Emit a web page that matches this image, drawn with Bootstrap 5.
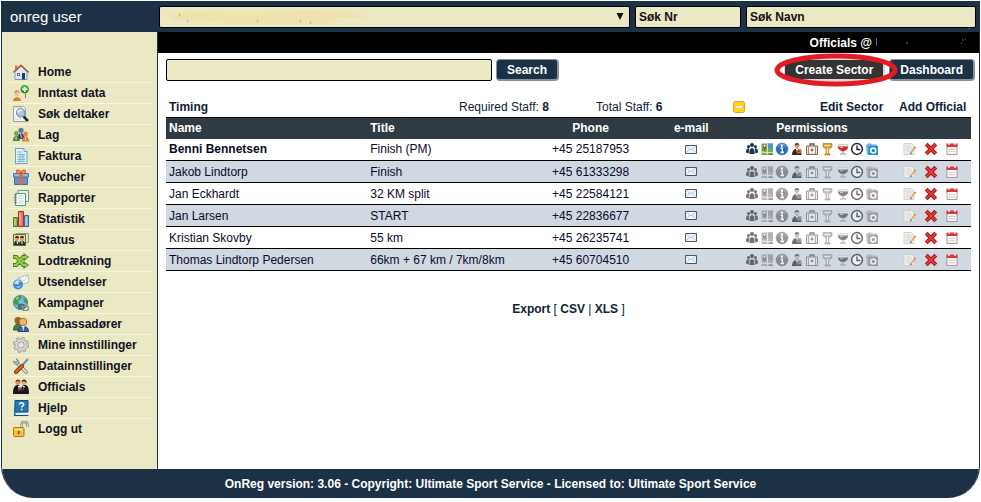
<!DOCTYPE html>
<html lang="no">
<head>
<meta charset="utf-8">
<meta name="viewport" content="width=device-width, initial-scale=1">
<title>Officials - OnReg</title>
<link rel="stylesheet" href="https://cdn.jsdelivr.net/npm/bootstrap@5.3.0/dist/css/bootstrap.min.css">
<style>
:root{--navy:#1c3146;--cream:#ebe9c3}
body{font:12px/20px "Liberation Sans",Arial,sans-serif;color:#0a0a2a;background:#fff}
svg{display:block;flex:none}
a{color:inherit;text-decoration:none}
.shell{margin:1px 1px 4px;min-height:calc(100vh - 5px);border:0 solid var(--navy);border-width:0 1px;border-radius:0 0 32px 32px;overflow:hidden}
.topbar{background:var(--navy);height:31px}
.brand{width:157px;padding-left:8px;font-size:15px;color:#fff}
.finders{gap:5px;padding-right:3px}
.field{height:22px;padding:0 3px;border:1px solid #000;border-radius:2px;background:var(--cream);font-weight:bold;color:#111;min-width:0}
.field::placeholder{color:#111;opacity:1}
.pick{appearance:none;width:100%;display:block}
.pick-art{position:absolute;inset:0;width:100%;height:22px;pointer-events:none}
.f-nr{width:106px}.f-name{width:230px}
.side{width:156px;background:var(--cream);border-right:1px solid var(--navy);padding:30px 4px 0;flex:none}
.side li{height:21px;border-bottom:1px solid #f8f6e2}
.side li:last-child{border:0}
.side a{padding-left:7px;gap:9px;color:#111122;height:20px}
.strip{background:#000;color:#fff;height:21px}
.body-pad{padding:6px 8px 0}
.tools{margin-right:-4px}
.f-search{width:326px}
.btn-nav{height:22px;padding:0 10px;border:1px solid #8c9298;border-width:1px 2px 2px 1px;border-radius:4px;background:var(--navy);color:#fff;font-weight:bold;line-height:18px}
.btn-dark2{background:#333;border-color:#d8d8d8}
.ring{position:absolute;left:-11px;top:-6px;width:126px;height:34px;pointer-events:none}
.sector{display:grid;grid-template-columns:290fr 137fr 137fr 87fr 79fr 75fr;margin-top:16px;height:20px}
.sector>*{padding-left:3px}
.sector,.export{color:#0f2438}
.people{table-layout:fixed;width:100%;border-top:1px solid #000}
.people th{background:#2f3a43;color:#fff;height:21px;line-height:20px;padding:0 3px}
.people td{height:22px;line-height:20px;padding:0 3px;border-bottom:1px solid #000}
.people tbody tr:nth-child(even){background:#d0d8e2}
.off{filter:grayscale(1);opacity:.68}
.acts>div{gap:7px;padding-left:18px}
.export{margin-top:28px}
.foot{background:var(--navy);color:#fff;height:29px}
</style>
<script src="https://cdn.jsdelivr.net/npm/bootstrap@5.3.0/dist/js/bootstrap.bundle.min.js"></script>
</head>
<body>
<svg width="0" height="0" class="position-absolute" aria-hidden="true">
<defs>
<symbol id="home" viewBox="0 0 16 16"><path d="M2 8v7.500h12V8L8 2z" fill="#dcebf7" stroke="#6f9cc0"/><path d="M2 1.500h2.500V5L2 7z" fill="#c9796a"/><path d="M.5 8.500 8 1.300l7.500 7.200" fill="none" stroke="#b5543c" stroke-width="1.600"/><path d="M1.500 9.300 8 3l6.500 6.300" fill="none" stroke="#f0d8cc" stroke-width=".8"/><path d="M9 9h3v6.500H9z" fill="#253c62"/><path d="M4 9h3v3H4z" fill="#35557d"/><path d="M5.500 9v3M4 10.500h3" stroke="#b9d7ef" stroke-width=".6"/></symbol>
<symbol id="adduser" viewBox="0 0 16 16"><circle cx="4" cy="8.500" r="2.700" fill="#f1c49c"/><path d="M1.300 8c0-4 5.400-4 5.400 0L5 7z" fill="#d9985c"/><path d="M0 16c0-5 8-5 8 0z" fill="#e77a22"/><path d="M9 16c0-4 5-5 6 0z" fill="#f0e3cb"/><path d="M12.500 9v4" stroke="#c0603a"/><circle cx="11.700" cy="4.300" r="4.200" fill="#26992b"/><circle cx="11.700" cy="3.300" r="2.800" fill="#5cc24e"/><path d="M11.700 1.700v5.200M9.100 4.300h5.200" stroke="#fff" stroke-width="1.600"/></symbol>
<symbol id="find" viewBox="0 0 16 16"><path d="M.5.500h10l2 2v13H.5z" fill="#f5f6f7" stroke="#9aa2a8"/><path d="M2 2h7M2 13h6" stroke="#c9d0d6"/><path d="m10.500 10.500 4.500 4.500" stroke="#222b3a" stroke-width="2.500"/><circle cx="7.700" cy="6.800" r="4.200" fill="#a9c9e8" stroke="#70808f"/><path d="M5 6.500c.3-2.500 3-3 4-2" stroke="#fff" fill="none" stroke-width="1.300"/></symbol>
<symbol id="team" viewBox="0 0 16 16"><circle cx="8" cy="3.300" r="2.600" fill="#5b74b8"/><path d="M4.500 12c0-8 7-8 7 0z" fill="#1f3d8c"/><circle cx="3.300" cy="6.500" r="2.400" fill="#8a9f44"/><path d="M0 14c0-7 6.800-7 6.800 0z" fill="#3b8a2c"/><circle cx="12.600" cy="7" r="2.400" fill="#d98a3c"/><path d="M9 14.500c0-7 7-7 7 0z" fill="#e57a1e"/><path d="m7.500 6 1 5M3 9.500v3.500M12.600 10v3.500" stroke="#fff" stroke-width=".8"/></symbol>
<symbol id="bill" viewBox="0 0 16 16"><path d="M2.500.500H11l3 3v12H2.500z" fill="#e2f2fa" stroke="#62a5c4"/><path d="M11 .5v3h3" fill="#fff" stroke="#62a5c4"/><path d="M4.500 4H9M4.500 6.500h7.500M4.500 9h7.500M4.500 11.500h7.500M4.500 13.500h7.500M7 6v8M9.800 6v8" stroke="#74b4d2"/></symbol>
<symbol id="gift" viewBox="0 0 16 16"><path d="M1.500 8h13v7.500h-13z" fill="#5b93d4" stroke="#3d6ea8"/><path d="M.5 4.500h15v3.500H.5z" fill="#8cbaea" stroke="#4377b5"/><path d="M6.300 4.500h3.400v11H6.300z" fill="#e8692a"/><path d="M8 4.500C5 4.500 3 3.500 3.700 1.800 4.500.3 7 1 8 4.500c1-3.500 3.500-4.200 4.300-2.700.7 1.700-1.300 2.700-4.300 2.700z" fill="#f7b18a" stroke="#dc541b" stroke-width="1.200"/></symbol>
<symbol id="report" viewBox="0 0 16 16"><path d="M5 .5h10.500v11H5z" fill="#e4f5e3" stroke="#5ca18c"/><path d="M2.500 3.500h10v12h-10z" fill="#f5fbf8" stroke="#519982"/><path d="M5 6h5.500M5 8.500h5.500M5 11h5.500M5 13h5.500" stroke="#c0d9d3"/><path d="M1 5h3M1 7.500h3M1 10h3M1 12.500h3" stroke="#777"/></symbol>
<symbol id="stats" viewBox="0 0 16 16"><path d="M.5 6.500h4v9h-4z" fill="#84bf45" stroke="#477d20"/><path d="M5.500.500h5v15h-5z" fill="#ee7468" stroke="#b52c25"/><path d="M11.500 4.500h4v11h-4z" fill="#79b4e8" stroke="#3169a6"/><path d="M7 2v12" stroke="#ffc4bc"/><path d="M2 8v6M13 6v8" stroke="#e3f3dc" stroke-width=".8"/></symbol>
<symbol id="status" viewBox="0 0 16 16"><path d="M3 1.500h12.500v9H3z" fill="#d8e8cb" stroke="#87a46b"/><path d="M.5 2.500h12v11H.5z" fill="#e8e0c4" stroke="#5d6b3e"/><path d="M1 13c0-6 5-6 5.500 0zM6 13c0-6 6-6 6.500 0z" fill="#2d2a26"/><circle cx="4" cy="6.500" r="2" fill="#d49a66"/><circle cx="9" cy="6.500" r="2" fill="#d49a66"/><path d="M2 6c0-3 4-3 4 0M7 6c0-3 4-3 4 0" fill="#5a2d14"/><path d="m4 9 .5 3M9 9v3" stroke="#fff"/></symbol>
<symbol id="shuffle" viewBox="0 0 16 16"><g fill="none" stroke="#43801c" stroke-width="3.800"><path d="M0 4h3.500l6.500 8h3M0 12h3.500L10 4h3"/></g><path d="m10.500 0 5.500 4-5.500 4.500zM10.500 8l5.500 4-5.500 4z" fill="#43801c"/><path d="M.7 4h2.800l6.500 8h4M.7 12h2.800L10 4h4" fill="none" stroke="#94d044" stroke-width="2.200"/><path d="m11.700 2 2.900 2.100-2.900 2.300zM11.700 9.700l2.900 2.300-2.900 2.200z" fill="#94d044"/></symbol>
<symbol id="send" viewBox="0 0 16 16"><path d="m5 4 10-3 1 7-9 3z" fill="#f8fafb" stroke="#a4b4c8" stroke-width=".8"/><path d="m5 4 6 3 4-6" fill="none" stroke="#b8c5d4" stroke-width=".8"/><circle cx="5" cy="10.500" r="5" fill="#4488cf"/><path d="M1 10c1-4 5-5 7-2-3-1-3 1-2 2-2 1-3-1-5 0z" fill="#c7e3f8"/><path d="M3 13c2-2 3 0 5-2-1 3-3 4-5 2z" fill="#8fc1ec"/></symbol>
<symbol id="campaign" viewBox="0 0 16 16"><circle cx="7.500" cy="7.500" r="7" fill="#7bb9e6" stroke="#38779e"/><path d="M2 3c3-3 6-2 7-1L7 5 5 6l1 3-3 1C0 8 1 5 2 3zM10 3l4 1v5l-3-2zM5 11l4-2 1 5H6z" fill="#3ca047"/><path d="M3 3c2-1.500 3-1 3-1L4 5z" fill="#b7dda0"/><rect x="5.500" y="9.500" width="6" height="4" rx="2" fill="none" stroke="#555f68" stroke-width="1.600"/><rect x="9.500" y="11.500" width="6" height="4" rx="2" fill="none" stroke="#848e95" stroke-width="1.600"/></symbol>
<symbol id="ambass" viewBox="0 0 16 16"><circle cx="5" cy="4.500" r="3.500" fill="#9a5c2c"/><path d="M.5 14c0-8 9-8 9 0z" fill="#517b38" stroke="#37562a"/><circle cx="10" cy="6" r="3.800" fill="#efb36b" stroke="#b46e2a"/><path d="M5 15.500c0-7 10.500-7 10.500 0z" fill="#3762b2" stroke="#1f4386"/><path d="m8 10 2.300 2 2.200-2z" fill="#fff"/><path d="M10.300 11.500v3" stroke="#fff"/></symbol>
<symbol id="gear" viewBox="0 0 16 16"><circle cx="8" cy="8" r="6.500" fill="none" stroke="#8e9192" stroke-width="3" stroke-dasharray="2.600 2.500"/><circle cx="8" cy="8" r="4.600" fill="none" stroke="#8e9192" stroke-width="3.800"/><circle cx="8" cy="8" r="6.200" fill="none" stroke="#d3d5d5" stroke-width="2.200" stroke-dasharray="1.600 3.270" stroke-dashoffset="-.5"/><circle cx="8" cy="8" r="4.600" fill="none" stroke="#d9dbdb" stroke-width="2.300"/></symbol>
<symbol id="tools" viewBox="0 0 16 16"><path d="m4 5 9 9" stroke="#6c7779" stroke-width="3.400" stroke-linecap="round"/><path d="m4 5 9 9" stroke="#d8e0e1" stroke-width="1.900" stroke-linecap="round"/><path d="M3.500.800C6 2 6.500 5 4.500 6 2 7 .5 5 .6 3L3 4.500 4.500 3z" fill="#c2cccc" stroke="#667375" stroke-width=".8"/><path d="M15 1 9.500 7" stroke="#788a93" stroke-width="2"/><path d="m9 8-6 6" stroke="#823714" stroke-width="4" stroke-linecap="round"/><path d="m9 8-6 6" stroke="#da702f" stroke-width="2" stroke-linecap="round"/></symbol>
<symbol id="officials" viewBox="0 0 16 16"><path d="M0 15C0 8 2 6 5 6c3 1 3 4 3 9zM8 15c0-7 1-9 4-9s4 3 4 9z" fill="#17171b"/><circle cx="5" cy="3.500" r="2.500" fill="#d89767"/><path d="M2.500 3c0-3.500 5-3.500 5 0L5 2z" fill="#8f2517"/><circle cx="11" cy="3.500" r="2.500" fill="#e3ab80"/><path d="M8.700 3c0-3.500 5-3.500 5 1L11 2z" fill="#292422"/><path d="m5 7 1 5 1-5zM10 7l0 4 2-4z" fill="#fff"/><path d="M6 8v4M10.500 8v3" stroke="#d22a26"/></symbol>
<symbol id="help" viewBox="0 0 16 16"><path d="M2 .5h13v11.500H2z" fill="#2878b5" stroke="#145283"/><path d="M1 12 2 .5v12l13 .5v2.500H1z" fill="#236ba3"/><path d="M2.500 13H15v2H2.500z" fill="#eaf2f7"/><path d="M1 15.500h14.500" stroke="#145283"/><path d="M6.700 4.500c0-2.400 4-2.400 4 0 0 1.400-2 1.300-2 3M8.700 8.800v1.500" fill="none" stroke="#fff" stroke-width="1.500"/></symbol>
<symbol id="lock" viewBox="0 0 16 16"><path d="M8.500 8V4c0-4 6-4 6 0v2" fill="none" stroke="#87898a" stroke-width="2.400"/><path d="M8.500 8V4c0-4 6-4 6 0v2" fill="none" stroke="#d9dbdc"/><rect x=".5" y="6.500" width="10.500" height="9" rx="1" fill="#f2bf35" stroke="#ae7a16"/><path d="M2 8.500h7.500" stroke="#fde996" stroke-width="1.500"/><path d="M5.700 10v3" stroke="#765010" stroke-width="1.600"/></symbol>

<symbol id="perms" viewBox="0 0 132 14">
<g fill="#17344f"><circle cx="6" cy="3" r="2"/><circle cx="2.500" cy="4.500" r="1.500"/><circle cx="9.500" cy="4.500" r="1.500"/><path d="M3.200 12c0-8 5.600-8 5.600 0zM0 10.500C-.3 6 3 5.500 3.500 7L3 11.500zM12 10.500c.3-4.500-3-5-3.500-3.500l.5 4.500z"/><path d="M3.200 7.500v4M8.800 7.500v4" stroke="#fff" stroke-width=".5"/></g>
<g transform="translate(15 1)"><path d="M.5.500H12v11.500H.5z" fill="#5fb457"/><path d="M7 .5h5v6L7 5.500z" fill="#3f9ccb"/><path d="M0 9 12 10" stroke="#ffd965" stroke-width="1.400"/><path d="M6.500 1v10.500" stroke="#f2e39b"/><path d="M8 10.500h4V12H8z" fill="#3f6cc2"/><path d="M3.500 8C-1.500-1 8.500-1 3.500 8z" fill="#a8483a"/><circle cx="3.500" cy="2.800" r="1" fill="#fff"/></g>
<g transform="translate(30 1)"><circle cx="6" cy="6" r="5.900" fill="#286fcb" stroke="#1a50a0" stroke-width=".5"/><path d="M2 4c2-4 6-4 8 0" fill="none" stroke="#87b9f3"/><circle cx="6" cy="2.800" r="1.200" fill="#fff"/><path d="M4.500 5.300H6.300V9.500M4.500 9.500h3.500" fill="none" stroke="#fff" stroke-width="1.500"/></g>
<g transform="translate(46 1)"><circle cx="5" cy="2.800" r="2.300" fill="#d69d73"/><path d="M2.500 2.500C3-.8 7-.8 7.500 2.500L6 1.500z" fill="#51301b"/><path d="M0 12C0 8 2 6 5 5.500c3 .5 4 2 4.500 6.500z" fill="#302a2a"/><path d="m3.700 6 1.300 3 1.500-3z" fill="#fff"/><path d="m4 8 4.500-1 .5 2-4 1" fill="none" stroke="#e36924" stroke-width="1.500"/></g>
<g transform="translate(60 1)"><path d="M4 3V1h4v2" fill="none" stroke="#5f554b" stroke-width="1.300"/><path d="M.5 3h11v8.500H.5z" fill="#ece7db" stroke="#74695a"/><path d="M2.500 3.500v7.500M9.500 3.500v7.500" stroke="#9c9180"/><circle cx="6" cy="7" r="2.500" fill="#fff"/><path d="M6 5.300v3.400M4.300 7h3.400" stroke="#d32522"/></g>
<g transform="translate(76 1)"><path d="M1 .5h9v3.500L6.800 6v3.500L8.500 12H2.500l1.700-2V6L1 4z" fill="#d5a33a" stroke="#a77520" stroke-width=".6"/><path d="M2.500 2.500H8M5.500 5v5" stroke="#fff0b2"/></g>
<g transform="translate(91 1)"><path d="M1 1.500h10C11 10 1 10 1 1.500z" fill="#f1e8e8" stroke="#bbb" stroke-width=".6"/><path d="M.8 3.500h10.400C10.500 9.700 1.500 9.700.8 3.500z" fill="#d12424"/><path d="M3 4.500h3" stroke="#f5a3a0"/><path d="M6 8v2.500" stroke="#888"/><path d="M3 11h6" stroke="#888" stroke-width="1.200"/></g>
<g transform="translate(105 1)"><circle cx="6" cy="6" r="5.400" fill="#fff" stroke="#202440" stroke-width="1.500"/><path d="M6 2.500V6.500h3.300" fill="none" stroke="#202440" stroke-width="1.400"/></g>
<g transform="translate(120 1)"><path d="M0 2.500 2 .5h3l1 1h5v10H1z" fill="#60b3dd"/><path d="M2.500 3H12v9H2.500z" fill="#268fca"/><circle cx="7.300" cy="7.500" r="3.300" fill="#e9f7ff"/><circle cx="7.300" cy="7.500" r="1.600" fill="#207eb9"/></g>
</symbol>
<symbol id="edit" viewBox="0 0 14 14"><path d="M1 1.500h7.500L11 4v8.500H1z" fill="#f0f0ee" stroke="#c8c8c5" stroke-width=".8"/><path d="M3 4h5M3 6h6M3 8h4M3 10h4" stroke="#c9ccce" stroke-width=".8"/><path d="m8 10.500 4-5" stroke="#e6b04d" stroke-width="2"/><path d="m7 12.300.6-2 1.400 1z" fill="#4b4034"/><path d="m11.700 6 .8-1" stroke="#c27880" stroke-width="2"/></symbol>
<symbol id="del" viewBox="0 0 14 14"><path d="m2.200 2.200 9.600 9.600M11.800 2.200l-9.600 9.600" stroke="#a91111" stroke-width="4"/><path d="m2.500 2.500 9 9M11.500 2.500l-9 9" stroke="#dd3c35" stroke-width="2.200"/></symbol>
<symbol id="cal" viewBox="0 0 14 14"><path d="M2 2.500h10v10H2z" fill="#f9f7f7" stroke="#9c8282" stroke-width=".8"/><path d="M1.600 1.500h10.800v3.500H1.600z" fill="#d53d3c"/><path d="M4 .5v2.500M10 .5v2.500" stroke="#fff" stroke-width="1.200"/><path d="M4 7.500h6M4 9.700h6" stroke="#bcb0b0" stroke-dasharray="1.300 1"/></symbol>
<symbol id="mail" viewBox="0 0 12 9"><path d="M.5.500h11v8H.5z" fill="#f2f7fc" stroke="#4e5765"/><path d="m1.500 1.500 4.500 3.500 4.500-3.500M1.500 7.500 4.500 4.300M10.500 7.500l-3-3.200" fill="none" stroke="#a9c5e2"/></symbol>
</defs>
</svg>

<div class="shell d-flex flex-column">
<header class="topbar d-flex align-items-center">
  <div class="brand flex-shrink-0">onreg user</div>
  <div class="finders d-flex flex-grow-1">
    <div class="position-relative flex-grow-1">
      <select class="field pick" aria-label="Event"><option></option></select>
      <svg class="pick-art" viewBox="0 0 471 22" preserveAspectRatio="xMaxYMid meet" aria-hidden="true"><path d="M5 8c40-5 70 1 110-2 30-2 55-2 80 1l15 4-35 1 5 4c-40 4-65 0-95 2-25 1-25-4-70-4z" fill="#efe2ad"/><path d="M28 15h1M98 15h1M141 15h1M20 9h1M151 17h1" stroke="#786846"/><path d="M457.500 7h7l-3.500 7z" fill="#111"/></svg>
    </div>
    <input class="field f-nr" type="text" placeholder="Søk Nr" aria-label="Søk Nr">
    <input class="field f-name" type="text" placeholder="Søk Navn" aria-label="Søk Navn">
  </div>
</header>

<div class="d-flex flex-grow-1">
  <nav class="side" aria-label="Menu">
    <ul class="list-unstyled m-0 fw-bold">
      <li><a href="#" class="d-flex align-items-center"><svg width="16" height="16"><use href="#home"/></svg>Home</a></li>
      <li><a href="#" class="d-flex align-items-center"><svg width="16" height="16"><use href="#adduser"/></svg>Inntast data</a></li>
      <li><a href="#" class="d-flex align-items-center"><svg width="16" height="16"><use href="#find"/></svg>Søk deltaker</a></li>
      <li><a href="#" class="d-flex align-items-center"><svg width="16" height="16"><use href="#team"/></svg>Lag</a></li>
      <li><a href="#" class="d-flex align-items-center"><svg width="16" height="16"><use href="#bill"/></svg>Faktura</a></li>
      <li><a href="#" class="d-flex align-items-center"><svg width="16" height="16"><use href="#gift"/></svg>Voucher</a></li>
      <li><a href="#" class="d-flex align-items-center"><svg width="16" height="16"><use href="#report"/></svg>Rapporter</a></li>
      <li><a href="#" class="d-flex align-items-center"><svg width="16" height="16"><use href="#stats"/></svg>Statistik</a></li>
      <li><a href="#" class="d-flex align-items-center"><svg width="16" height="16"><use href="#status"/></svg>Status</a></li>
      <li><a href="#" class="d-flex align-items-center"><svg width="16" height="16"><use href="#shuffle"/></svg>Lodtrækning</a></li>
      <li><a href="#" class="d-flex align-items-center"><svg width="16" height="16"><use href="#send"/></svg>Utsendelser</a></li>
      <li><a href="#" class="d-flex align-items-center"><svg width="16" height="16"><use href="#campaign"/></svg>Kampagner</a></li>
      <li><a href="#" class="d-flex align-items-center"><svg width="16" height="16"><use href="#ambass"/></svg>Ambassadører</a></li>
      <li><a href="#" class="d-flex align-items-center"><svg width="16" height="16"><use href="#gear"/></svg>Mine innstillinger</a></li>
      <li><a href="#" class="d-flex align-items-center"><svg width="16" height="16"><use href="#tools"/></svg>Datainnstillinger</a></li>
      <li><a href="#" class="d-flex align-items-center"><svg width="16" height="16"><use href="#officials"/></svg>Officials</a></li>
      <li><a href="#" class="d-flex align-items-center"><svg width="16" height="16"><use href="#help"/></svg>Hjelp</a></li>
      <li><a href="#" class="d-flex align-items-center"><svg width="16" height="16"><use href="#lock"/></svg>Logg ut</a></li>
    </ul>
  </nav>

  <main class="flex-grow-1">
    <div class="strip d-flex justify-content-end align-items-center fw-bold">Officials @
      <svg class="ms-1 me-2" width="95" height="14" aria-hidden="true"><path d="M.5 2v8" stroke="#37669a"/><path d="M30 7h2M86 4h2M89 3h1M85 7h1" stroke="#777"/></svg>
    </div>
    <div class="body-pad">
      <div class="tools d-flex align-items-center">
        <input class="field f-search" type="text" aria-label="Search officials">
        <button type="button" class="btn-nav ms-1">Search</button>
        <div class="ms-auto position-relative">
          <button type="button" class="btn-nav btn-dark2">Create Sector</button>
          <svg class="ring" viewBox="0 0 126 34" aria-hidden="true"><ellipse cx="63" cy="17" rx="59" ry="14" fill="none" stroke="#e41b23" stroke-width="5"/></svg>
        </div>
        <button type="button" class="btn-nav ms-1">Dashboard</button>
      </div>

      <div class="sector">
        <strong>Timing</strong>
        <span>Required Staff: <b>8</b></span>
        <span>Total Staff: <b>6</b></span>
        <a href="#" class="d-flex align-items-center" aria-label="Collapse"><svg width="12" height="12"><rect x=".5" y=".5" width="11" height="11" rx="2" fill="#ffd21f" stroke="#e3a31a"/><path d="M3 6h6" stroke="#fff" stroke-width="2"/></svg></a>
        <a href="#" class="fw-bold">Edit Sector</a>
        <a href="#" class="fw-bold">Add Official</a>
      </div>

      <table class="people">
        <colgroup><col style="width:25%"><col style="width:21.5%"><col style="width:12.5%"><col style="width:12.5%"><col style="width:17.5%"><col style="width:11%"></colgroup>
        <thead><tr><th>Name</th><th>Title</th><th class="text-center">Phone</th><th class="text-center">e-mail</th><th class="text-center">Permissions</th><th></th></tr></thead>
        <tbody>
          <tr><td class="fw-bold">Benni Bennetsen</td><td>Finish (PM)</td><td class="text-center text-nowrap">+45 25187953</td><td><a href="#" aria-label="e-mail"><svg class="mx-auto" width="12" height="9"><use href="#mail"/></svg></a></td><td><svg class="mx-auto" width="132" height="14"><use href="#perms"/></svg></td><td class="acts"><div class="d-flex"><a href="#" aria-label="Edit"><svg width="14" height="14"><use href="#edit"/></svg></a><a href="#" aria-label="Delete"><svg width="14" height="14"><use href="#del"/></svg></a><a href="#" aria-label="Calendar"><svg width="14" height="14"><use href="#cal"/></svg></a></div></td></tr>
          <tr><td>Jakob Lindtorp</td><td>Finish</td><td class="text-center text-nowrap">+45 61333298</td><td><a href="#" aria-label="e-mail"><svg class="mx-auto" width="12" height="9"><use href="#mail"/></svg></a></td><td><svg class="mx-auto off" width="132" height="14"><use href="#perms"/></svg></td><td class="acts"><div class="d-flex"><a href="#" aria-label="Edit"><svg width="14" height="14"><use href="#edit"/></svg></a><a href="#" aria-label="Delete"><svg width="14" height="14"><use href="#del"/></svg></a><a href="#" aria-label="Calendar"><svg width="14" height="14"><use href="#cal"/></svg></a></div></td></tr>
          <tr><td>Jan Eckhardt</td><td>32 KM split</td><td class="text-center text-nowrap">+45 22584121</td><td><a href="#" aria-label="e-mail"><svg class="mx-auto" width="12" height="9"><use href="#mail"/></svg></a></td><td><svg class="mx-auto off" width="132" height="14"><use href="#perms"/></svg></td><td class="acts"><div class="d-flex"><a href="#" aria-label="Edit"><svg width="14" height="14"><use href="#edit"/></svg></a><a href="#" aria-label="Delete"><svg width="14" height="14"><use href="#del"/></svg></a><a href="#" aria-label="Calendar"><svg width="14" height="14"><use href="#cal"/></svg></a></div></td></tr>
          <tr><td>Jan Larsen</td><td>START</td><td class="text-center text-nowrap">+45 22836677</td><td><a href="#" aria-label="e-mail"><svg class="mx-auto" width="12" height="9"><use href="#mail"/></svg></a></td><td><svg class="mx-auto off" width="132" height="14"><use href="#perms"/></svg></td><td class="acts"><div class="d-flex"><a href="#" aria-label="Edit"><svg width="14" height="14"><use href="#edit"/></svg></a><a href="#" aria-label="Delete"><svg width="14" height="14"><use href="#del"/></svg></a><a href="#" aria-label="Calendar"><svg width="14" height="14"><use href="#cal"/></svg></a></div></td></tr>
          <tr><td>Kristian Skovby</td><td>55 km</td><td class="text-center text-nowrap">+45 26235741</td><td><a href="#" aria-label="e-mail"><svg class="mx-auto" width="12" height="9"><use href="#mail"/></svg></a></td><td><svg class="mx-auto off" width="132" height="14"><use href="#perms"/></svg></td><td class="acts"><div class="d-flex"><a href="#" aria-label="Edit"><svg width="14" height="14"><use href="#edit"/></svg></a><a href="#" aria-label="Delete"><svg width="14" height="14"><use href="#del"/></svg></a><a href="#" aria-label="Calendar"><svg width="14" height="14"><use href="#cal"/></svg></a></div></td></tr>
          <tr><td>Thomas Lindtorp Pedersen</td><td>66km + 67 km / 7km/8km</td><td class="text-center text-nowrap">+45 60704510</td><td><a href="#" aria-label="e-mail"><svg class="mx-auto" width="12" height="9"><use href="#mail"/></svg></a></td><td><svg class="mx-auto off" width="132" height="14"><use href="#perms"/></svg></td><td class="acts"><div class="d-flex"><a href="#" aria-label="Edit"><svg width="14" height="14"><use href="#edit"/></svg></a><a href="#" aria-label="Delete"><svg width="14" height="14"><use href="#del"/></svg></a><a href="#" aria-label="Calendar"><svg width="14" height="14"><use href="#cal"/></svg></a></div></td></tr>
        </tbody>
      </table>
      <p class="export fw-bold text-center mb-0">Export <span class="fw-normal">[</span> <a href="#">CSV</a> <span class="fw-normal">|</span> <a href="#">XLS</a> <span class="fw-normal">]</span></p>
    </div>
  </main>
</div>
<footer class="foot d-flex align-items-center justify-content-center fw-bold">OnReg version: 3.06 - Copyright: Ultimate Sport Service - Licensed to: Ultimate Sport Service</footer>
</div>
</body>
</html>
